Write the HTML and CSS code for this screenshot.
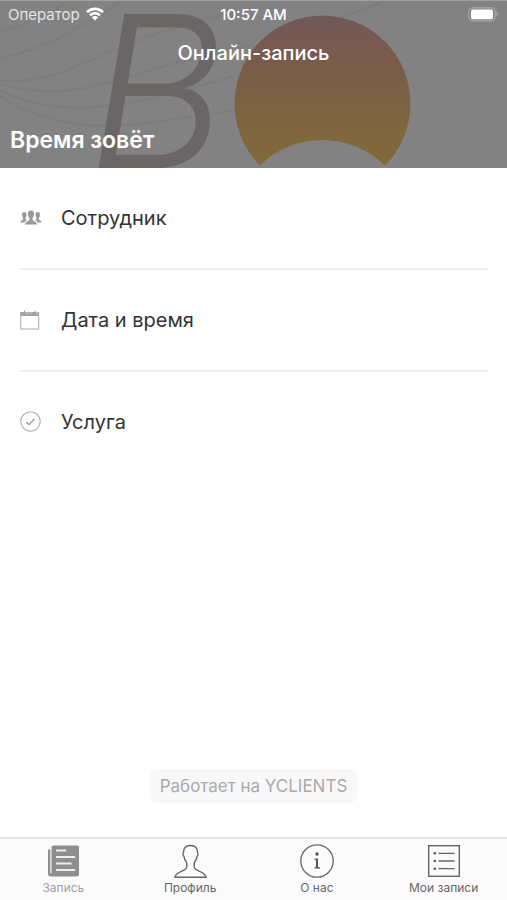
FILE: index.html
```html
<!DOCTYPE html>
<html lang="ru">
<head>
<meta charset="utf-8">
<meta name="viewport" content="width=device-width, initial-scale=1">
<title>Онлайн-запись</title>
<link rel="stylesheet" href="styles.css">
</head>
<body>
<div class="screen">
  <header class="hero">
    <svg class="hero-art" viewBox="0 0 507 168" preserveAspectRatio="xMidYMid slice" aria-hidden="true">
      <defs>
        <linearGradient id="sun" x1="0" y1="0" x2="0" y2="1">
          <stop offset="0" stop-color="#70585a"/>
          <stop offset=".25" stop-color="#795a4e"/>
          <stop offset=".6" stop-color="#7c6342"/>
          <stop offset="1" stop-color="#836a38"/>
        </linearGradient>
      </defs>
      <g fill="none" stroke="#7d7d7d" stroke-width="2">
        <path d="M0 58C50 48 90 20 122 0"/>
        <path d="M0 80C70 86 100 40 235 12"/>
        <path d="M0 83C80 110 150 60 250 45"/>
        <path d="M0 90C70 125 150 100 235 75"/>
        <path d="M0 96C80 145 150 120 235 110"/>
        <path d="M0 32C30 22 55 10 70 0"/>
        <path d="M250 50C290 30 340 20 385 0"/>
      </g>
      <text class="art-letter" x="88" y="167">B</text>
      <path fill="url(#sun)" d="M260 165A88 88 0 1 1 385 165C350 131 294 131 260 165Z"/>
    </svg>
    <div class="status">
      <span class="carrier">Оператор
        <svg width="18" height="14" viewBox="0 0 18 14" fill="none" stroke="#fff" stroke-width="2.6" aria-hidden="true">
          <path d="M1 5.2C5.500 .8 12.500 .8 17 5.200"/>
          <path d="M4 8.400C6.800 5.600 11.200 5.600 14 8.400"/>
          <path fill="#fff" stroke="none" d="M5.800 10.300Q9 7.600 12.200 10.300L9 13.600Z"/>
        </svg>
      </span>
      <time class="clock">10:57 AM</time>
      <svg class="battery" width="31" height="15" viewBox="0 0 31 15" aria-hidden="true">
        <rect x=".8" y=".8" width="26.400" height="13" rx="4" fill="none" stroke="#a8a8a8" stroke-width="1.200"/>
        <rect x="3" y="2.600" width="22" height="9.600" rx="1.800" fill="#fff"/>
        <path d="M28.500 4.500Q31.500 7.300 28.500 10Z" fill="#a8a8a8"/>
      </svg>
    </div>
    <h1 class="title">Онлайн-запись</h1>
    <h2 class="salon">Время зовёт</h2>
  </header>

  <main class="content">
    <nav class="steps" aria-label="Запись">
      <a class="step" href="#staff">
        <svg width="22" height="22" viewBox="0 0 22 22" fill="#999" aria-hidden="true">
          <path d="M11 3.500c2.300 0 3.300 1.500 3.100 3.700-.1 1.800-.8 2.800-1.500 3.800v2c.5 1.300 4 1.500 4.500 4.600H4.900c.5-3.100 4-3.300 4.500-4.600V11C8.700 10 8 9 7.900 7.200 7.700 5 8.700 3.500 11 3.500Z"/>
          <path d="M4.300 5c1.300 0 2.100.8 2.200 2.300 0 1.700-.5 2.900-1 3.600v1.300c.2.500.8.700 1.400 1-1.300.6-2.100 1.200-2.500 2.300H.3c.2-2.300 2.500-2 2.800-3.300v-1.300C2.500 10.200 2 9 2 7.300 2.100 5.800 3 5 4.300 5Z"/>
          <path d="M17.700 5c-1.300 0-2.100.8-2.200 2.300 0 1.700.5 2.900 1 3.600v1.300c-.2.500-.8.700-1.400 1 1.300.6 2.100 1.200 2.500 2.300h4.100c-.2-2.300-2.500-2-2.800-3.300v-1.300c.6-.7 1.100-1.900 1.100-3.600C19.900 5.800 19 5 17.700 5Z"/>
        </svg>
        <span>Сотрудник</span>
      </a>
      <a class="step" href="#date">
        <svg width="22" height="22" viewBox="0 0 22 22" aria-hidden="true">
          <rect x=".7" y="3.500" width="18" height="16.500" fill="#fff" stroke="#b0b0b0" stroke-width="1.100"/>
          <rect x=".7" y="3" width="18" height="4" fill="#a4a4a4"/>
          <path d="M4.500 1.500v4M15 1.500v4" stroke="#999" stroke-width="1"/>
          <path d="M5.500 4h1.500M8 4h1.500M10.500 4H12M16 4h1.500" stroke="#ddd" stroke-width="1"/>
        </svg>
        <span>Дата и время</span>
      </a>
      <a class="step" href="#service">
        <svg width="22" height="22" viewBox="0 0 22 22" fill="none" stroke="#aaa" aria-hidden="true">
          <circle cx="10.500" cy="10.500" r="9.700" stroke-width="1.100"/>
          <path d="M6.300 11.200 9 13.700 14.500 7.700" stroke="#999" stroke-width="1.300"/>
        </svg>
        <span>Услуга</span>
      </a>
    </nav>
    <a class="powered" href="#yclients">Работает на YCLIENTS</a>
  </main>

  <nav class="tabs" aria-label="Разделы">
    <a class="tab tab-active" href="#booking" aria-current="page">
      <svg width="34" height="34" viewBox="0 0 34 34" aria-hidden="true">
        <path fill="#8e8e8e" d="M7.500 1.500H31.500Q33 1.500 33 3V30.500Q33 32.500 31 32.500H5Q2 32.500 2 29.500V5.500H4.300V28.500Q4.300 29.800 5.500 29.500V3.500Q5.500 1.500 7.500 1.500Z"/>
        <path d="M10 6.500H20M10 13H29M10 19.500H25.500M10 26H29" stroke="#eee" stroke-width="1.800"/>
      </svg>
      <span>Запись</span>
    </a>
    <a class="tab" href="#profile">
      <svg width="34" height="34" viewBox="0 0 34 34" fill="none" stroke="#666" stroke-width="1.400" aria-hidden="true">
        <path d="M17.500 1.500C22 1.500 24.500 4 24.500 8.500C25.500 9.500 25 11.500 24 12.500C23.800 14.500 23 16.500 21.500 18C21 20 21 22 21.500 24C23 27.500 32 27 33 33.200H2C3 27 12 27.500 13.500 24C14 22 14 20 13.500 18C12 16.500 11.200 14.500 11 12.500C10 11.500 9.500 9.500 10.500 8.500C10.500 4 13 1.500 17.500 1.500Z"/>
      </svg>
      <span>Профиль</span>
    </a>
    <a class="tab" href="#about">
      <svg width="34" height="34" viewBox="0 0 34 34" aria-hidden="true">
        <circle cx="17" cy="17" r="16.200" fill="none" stroke="#666" stroke-width="1.300"/>
        <circle cx="17" cy="10" r="1.700" fill="#555"/>
        <path d="M14.500 14.500H18V23.300H20V24.500H14.500V23.300H16V15.700H14.500Z" fill="#555"/>
      </svg>
      <span>О нас</span>
    </a>
    <a class="tab" href="#records">
      <svg width="34" height="34" viewBox="0 0 34 34" fill="none" stroke="#666" aria-hidden="true">
        <rect x="1.700" y="1.700" width="30.600" height="30.600" stroke-width="1.400"/>
        <path d="M11.500 9.300H27.500M11.500 17H27.500M11.500 24.700H27.500" stroke-width="1.300"/>
        <g fill="#555" stroke="none"><circle cx="7.800" cy="9.300" r="1.300"/><circle cx="7.800" cy="17" r="1.300"/><circle cx="7.800" cy="24.700" r="1.300"/></g>
      </svg>
      <span>Мои записи</span>
    </a>
  </nav>
</div>
</body>
</html>
```
FILE: styles.css
```css
* {
  box-sizing: border-box;
}

body {
  margin: 0;
  font-family: Inter, "Liberation Sans", sans-serif;
  color: #333;
  background: #fff;
}

a {
  color: inherit;
  text-decoration: none;
}

svg {
  display: block;
  flex: none;
}

.screen {
  display: flex;
  flex-direction: column;
  min-height: 100vh;
}

.hero {
  position: relative;
  display: flex;
  flex-direction: column;
  padding-bottom: 13px;
  color: #fff;
  background: #828282;
  border-top: 1px solid #a0a0a0;
}

.hero-art {
  position: absolute;
  inset: 0;
  width: 100%;
  height: 100%;
}

.art-letter {
  font-family: Inter, sans-serif;
  font-size: 212px;
  font-style: italic;
  font-weight: 300;
  fill: #6b6666;
}

.status {
  position: relative;
  display: grid;
  grid-template-columns: 1fr auto 1fr;
  align-items: center;
  height: 26px;
  padding: 0 8px;
  font-size: 15px;
}

.carrier {
  display: flex;
  align-items: center;
  gap: 6px;
  color: #e4e4e4;
}

.clock {
  font-weight: 500;
}

.battery {
  justify-self: end;
}

.title {
  position: relative;
  margin: 12px 0 0;
  font-size: 20px;
  line-height: 28px;
  font-weight: 500;
  text-align: center;
}

.salon {
  position: relative;
  margin: 58px 0 0;
  padding: 0 10px;
  font-size: 23px;
  line-height: 30px;
  font-weight: 600;
}

.content {
  flex: 1;
  display: flex;
  flex-direction: column;
  align-items: center;
}

.steps {
  align-self: stretch;
  padding: 0 19px 0 20px;
}

.step {
  display: flex;
  align-items: center;
  gap: 19px;
  padding: 38px 0;
  font-size: 20px;
  line-height: 24px;
}

.step + .step {
  border-top: 2px solid #eee;
}

.powered {
  margin-top: auto;
  margin-bottom: 34px;
  padding: 6px 10px;
  border-radius: 8px;
  font-size: 17px;
  line-height: 22px;
  color: #aaa;
  background: #f8f8f8;
}

.tabs {
  display: grid;
  grid-template-columns: repeat(4, 1fr);
  padding: 5px 0 4px;
  border-top: 2px solid #e2e2e2;
  background: #fbfbfb;
}

.tab {
  display: flex;
  flex-direction: column;
  align-items: center;
  gap: 2px;
  font-size: 12px;
  line-height: 16px;
  color: #666;
}

.tab-active {
  color: #a0a0a0;
}
```
